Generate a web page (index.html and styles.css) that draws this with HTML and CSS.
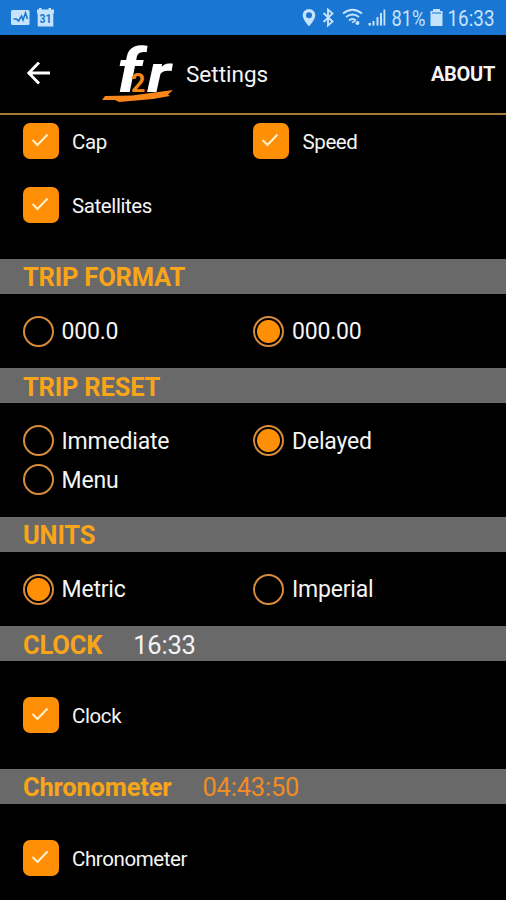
FILE: index.html
```html
<!DOCTYPE html>
<html lang="en">
<head>
  <meta charset="UTF-8" />
  <title>Settings</title>
  <link rel="stylesheet" href="styles.css">
</head>
<body>

  <!-- Status bar -->
  <div class="statusbar">
    <svg width="506" height="35" viewBox="0 0 506 35">
      <g fill="#c5e3fb">
        <rect x="11" y="10" width="18.500" height="15" rx="1.500" />
        <path d="M37 9.500h2v-1.500h2.500v1.500h7v-1.500h2.500v1.500h3v3.500l-.7 1v12.500h-15.600v-12.500l-.7-1z" />
        <path fill-rule="evenodd" d="M309 9a6.300 6.300 0 0 0-6.300 6.300c0 4.500 6.300 11 6.300 11s6.300-6.500 6.300-11a6.300 6.300 0 0 0-6.300-6.300zm0 3.200a3 3 0 1 1 0 6a3 3 0 0 1 0-6z" />
        <path d="M368.500 23h2.500v2.500h-2.500zM372.500 21h2v4.500h-2zM376.500 17h2v8.500h-2zM380 13h2v12.500h-2zM383.500 9.500h1.800v16h-1.800z" />
        <path d="M433 9h7v2h2.500v15h-12v-15h2.500z" />
        <circle cx="357.500" cy="23" r="2" />
      </g>
      <path d="M432 13h9" stroke="#1976d2" stroke-width="1" />
      <path d="M13.500 19h3l2 2 3-5 1.500 4 2.500-7 2 6" fill="none" stroke="#1976d2" stroke-width="1.600" />
      <g fill="none" stroke="#c5e3fb" stroke-width="1.900">
        <path d="M323.500 13l9 8.500-4.500 4v-16l4.500 4-9 8.500" />
        <path d="M343 13.500q9.500-7.500 19 0M346 17q6.500-5 13 0M349 20.500q3.500-3 7 0" />
      </g>
      <path d="M352 22.500l3-1.500" stroke="#c5e3fb" stroke-width="1.500" />
      <text x="39.500" y="23" class="cal" textLength="12" lengthAdjust="spacingAndGlyphs">31</text>
      <text x="391.500" y="25.500" class="status-text" textLength="34" lengthAdjust="spacingAndGlyphs">81%</text>
      <text x="447.500" y="25.500" class="status-text" textLength="47" lengthAdjust="spacingAndGlyphs">16:33</text>
    </svg>
  </div>

  <!-- Header -->
  <div class="header">
    <svg class="back" width="24" height="24" viewBox="0 0 24 24">
      <path d="M23 11H2M12 .5L1.800 11L12 21.500" fill="none" stroke="#fff" stroke-width="2.800" />
    </svg>
    <svg class="logo" width="74" height="62" viewBox="0 0 74 62">
      <text x="15" y="49" class="logo-f" textLength="25" lengthAdjust="spacingAndGlyphs">f</text>
      <text x="45" y="49" class="logo-r" textLength="24" lengthAdjust="spacingAndGlyphs">r</text>
      <text x="29" y="48.500" class="logo-2">2</text>
      <path d="M3 53L30 52.500L71 47L66 51.500L68 53L51 56L17 59L13 57L0 57z" fill="#f7861b" />
    </svg>
    <span class="title">Settings</span>
    <span class="about">ABOUT</span>
  </div>

  <div class="panel display">
    <label class="check"><span class="box"><svg width="18" height="14" viewBox="0 0 18 14"><path d="M1.500 7l5 5L16.500 1.500" /></svg></span>Cap</label>
    <label class="check"><span class="box"><svg width="18" height="14" viewBox="0 0 18 14"><path d="M1.500 7l5 5L16.500 1.500" /></svg></span>Speed</label>
    <label class="check"><span class="box"><svg width="18" height="14" viewBox="0 0 18 14"><path d="M1.500 7l5 5L16.500 1.500" /></svg></span>Satellites</label>
  </div>

  <h2>TRIP FORMAT</h2>
  <div class="panel radios">
    <label class="radio"><span class="dot"></span>000.0</label>
    <label class="radio"><span class="dot on"></span>000.00</label>
  </div>

  <h2>TRIP RESET</h2>
  <div class="panel radios reset">
    <label class="radio"><span class="dot"></span>Immediate</label>
    <label class="radio"><span class="dot on"></span>Delayed</label>
    <label class="radio"><span class="dot"></span>Menu</label>
  </div>

  <h2>UNITS</h2>
  <div class="panel radios">
    <label class="radio"><span class="dot on"></span>Metric</label>
    <label class="radio"><span class="dot"></span>Imperial</label>
  </div>

  <h2>CLOCK <span class="time">16:33</span></h2>
  <div class="panel single">
    <label class="check"><span class="box"><svg width="18" height="14" viewBox="0 0 18 14"><path d="M1.500 7l5 5L16.500 1.500" /></svg></span>Clock</label>
  </div>

  <h2>Chronometer <span class="time chrono">04:43:50</span></h2>
  <div class="panel single last">
    <label class="check"><span class="box"><svg width="18" height="14" viewBox="0 0 18 14"><path d="M1.500 7l5 5L16.500 1.500" /></svg></span>Chronometer</label>
  </div>

</body>
</html>
```

FILE: styles.css
```css
* { box-sizing: border-box; }
body {
  margin: 0;
  height: 900px;
  overflow: hidden;
  background: #000;
  color: #f4f4f4;
  font-family: Roboto, sans-serif;
}
svg { display: block; }
.statusbar {
  height: 35px;
  background: #1976d2;
}
.status-text {
  font-size: 22px;
  fill: #c5e3fb;
}
.cal {
  font-size: 12px;
  font-weight: bold;
  fill: #1976d2;
}
.header {
  height: 80px;
  display: flex;
  align-items: center;
  padding: 0 11px 0 27px;
  border-bottom: 2px solid #a87939;
}
.logo {
  margin-left: 51px;
  overflow: visible;
}
.logo-f, .logo-r {
  font-weight: bold;
  font-style: italic;
  font-size: 61px;
  fill: #fff;
}
.logo-r { font-size: 53px; }
.logo-2 {
  font-size: 25px;
  font-weight: bold;
  fill: #f7861b;
}
.title {
  margin-left: 10px;
  font-size: 22.5px;
}
.about {
  margin-left: auto;
  font-size: 20px;
  font-weight: bold;
  letter-spacing: -0.3px;
}
.panel {
  display: grid;
  grid-template-columns: 230.5px 1fr;
  align-content: start;
  padding-left: 22.5px;
  height: 74.5px;
}
.display {
  height: 143.5px;
  padding-top: 8px;
  row-gap: 25.5px;
}
.check, .radio {
  display: flex;
  align-items: center;
}
.check {
  height: 38px;
  font-size: 20.5px;
  letter-spacing: -0.4px;
}
.box {
  width: 36px;
  height: 36px;
  margin: 0 13.5px 2px 0;
  border-radius: 7px;
  background: #ff8f06;
  display: flex;
  justify-content: center;
  align-items: center;
}
.box svg { margin: -2px 2px 0 0; }
.box path {
  fill: none;
  stroke: #fff2cf;
  stroke-width: 2;
}
h2 {
  display: flex;
  align-items: center;
  height: 35px;
  margin: 0;
  padding: 2px 0 0 23px;
  background: #696969;
  color: #f9a51a;
  font-size: 25.5px;
  font-weight: bold;
  letter-spacing: -0.2px;
}
.time {
  margin-left: 31px;
  color: #f4f4f4;
  font-weight: normal;
}
.chrono { color: #ef8d26; }
.radios { padding-top: 18.5px; }
.radio {
  height: 39px;
  font-size: 23px;
  letter-spacing: -0.2px;
}
.dot {
  width: 31px;
  height: 31px;
  margin: 0 8px 1px 0;
  border: 2px solid #d88b3b;
  border-radius: 50%;
}
.on {
  background: radial-gradient(circle, #ff8f06 11px, #000 12px);
}
.reset { height: 113.5px; }
.single {
  height: 107.5px;
  padding-top: 36px;
}
.last { height: 96px; }
```
